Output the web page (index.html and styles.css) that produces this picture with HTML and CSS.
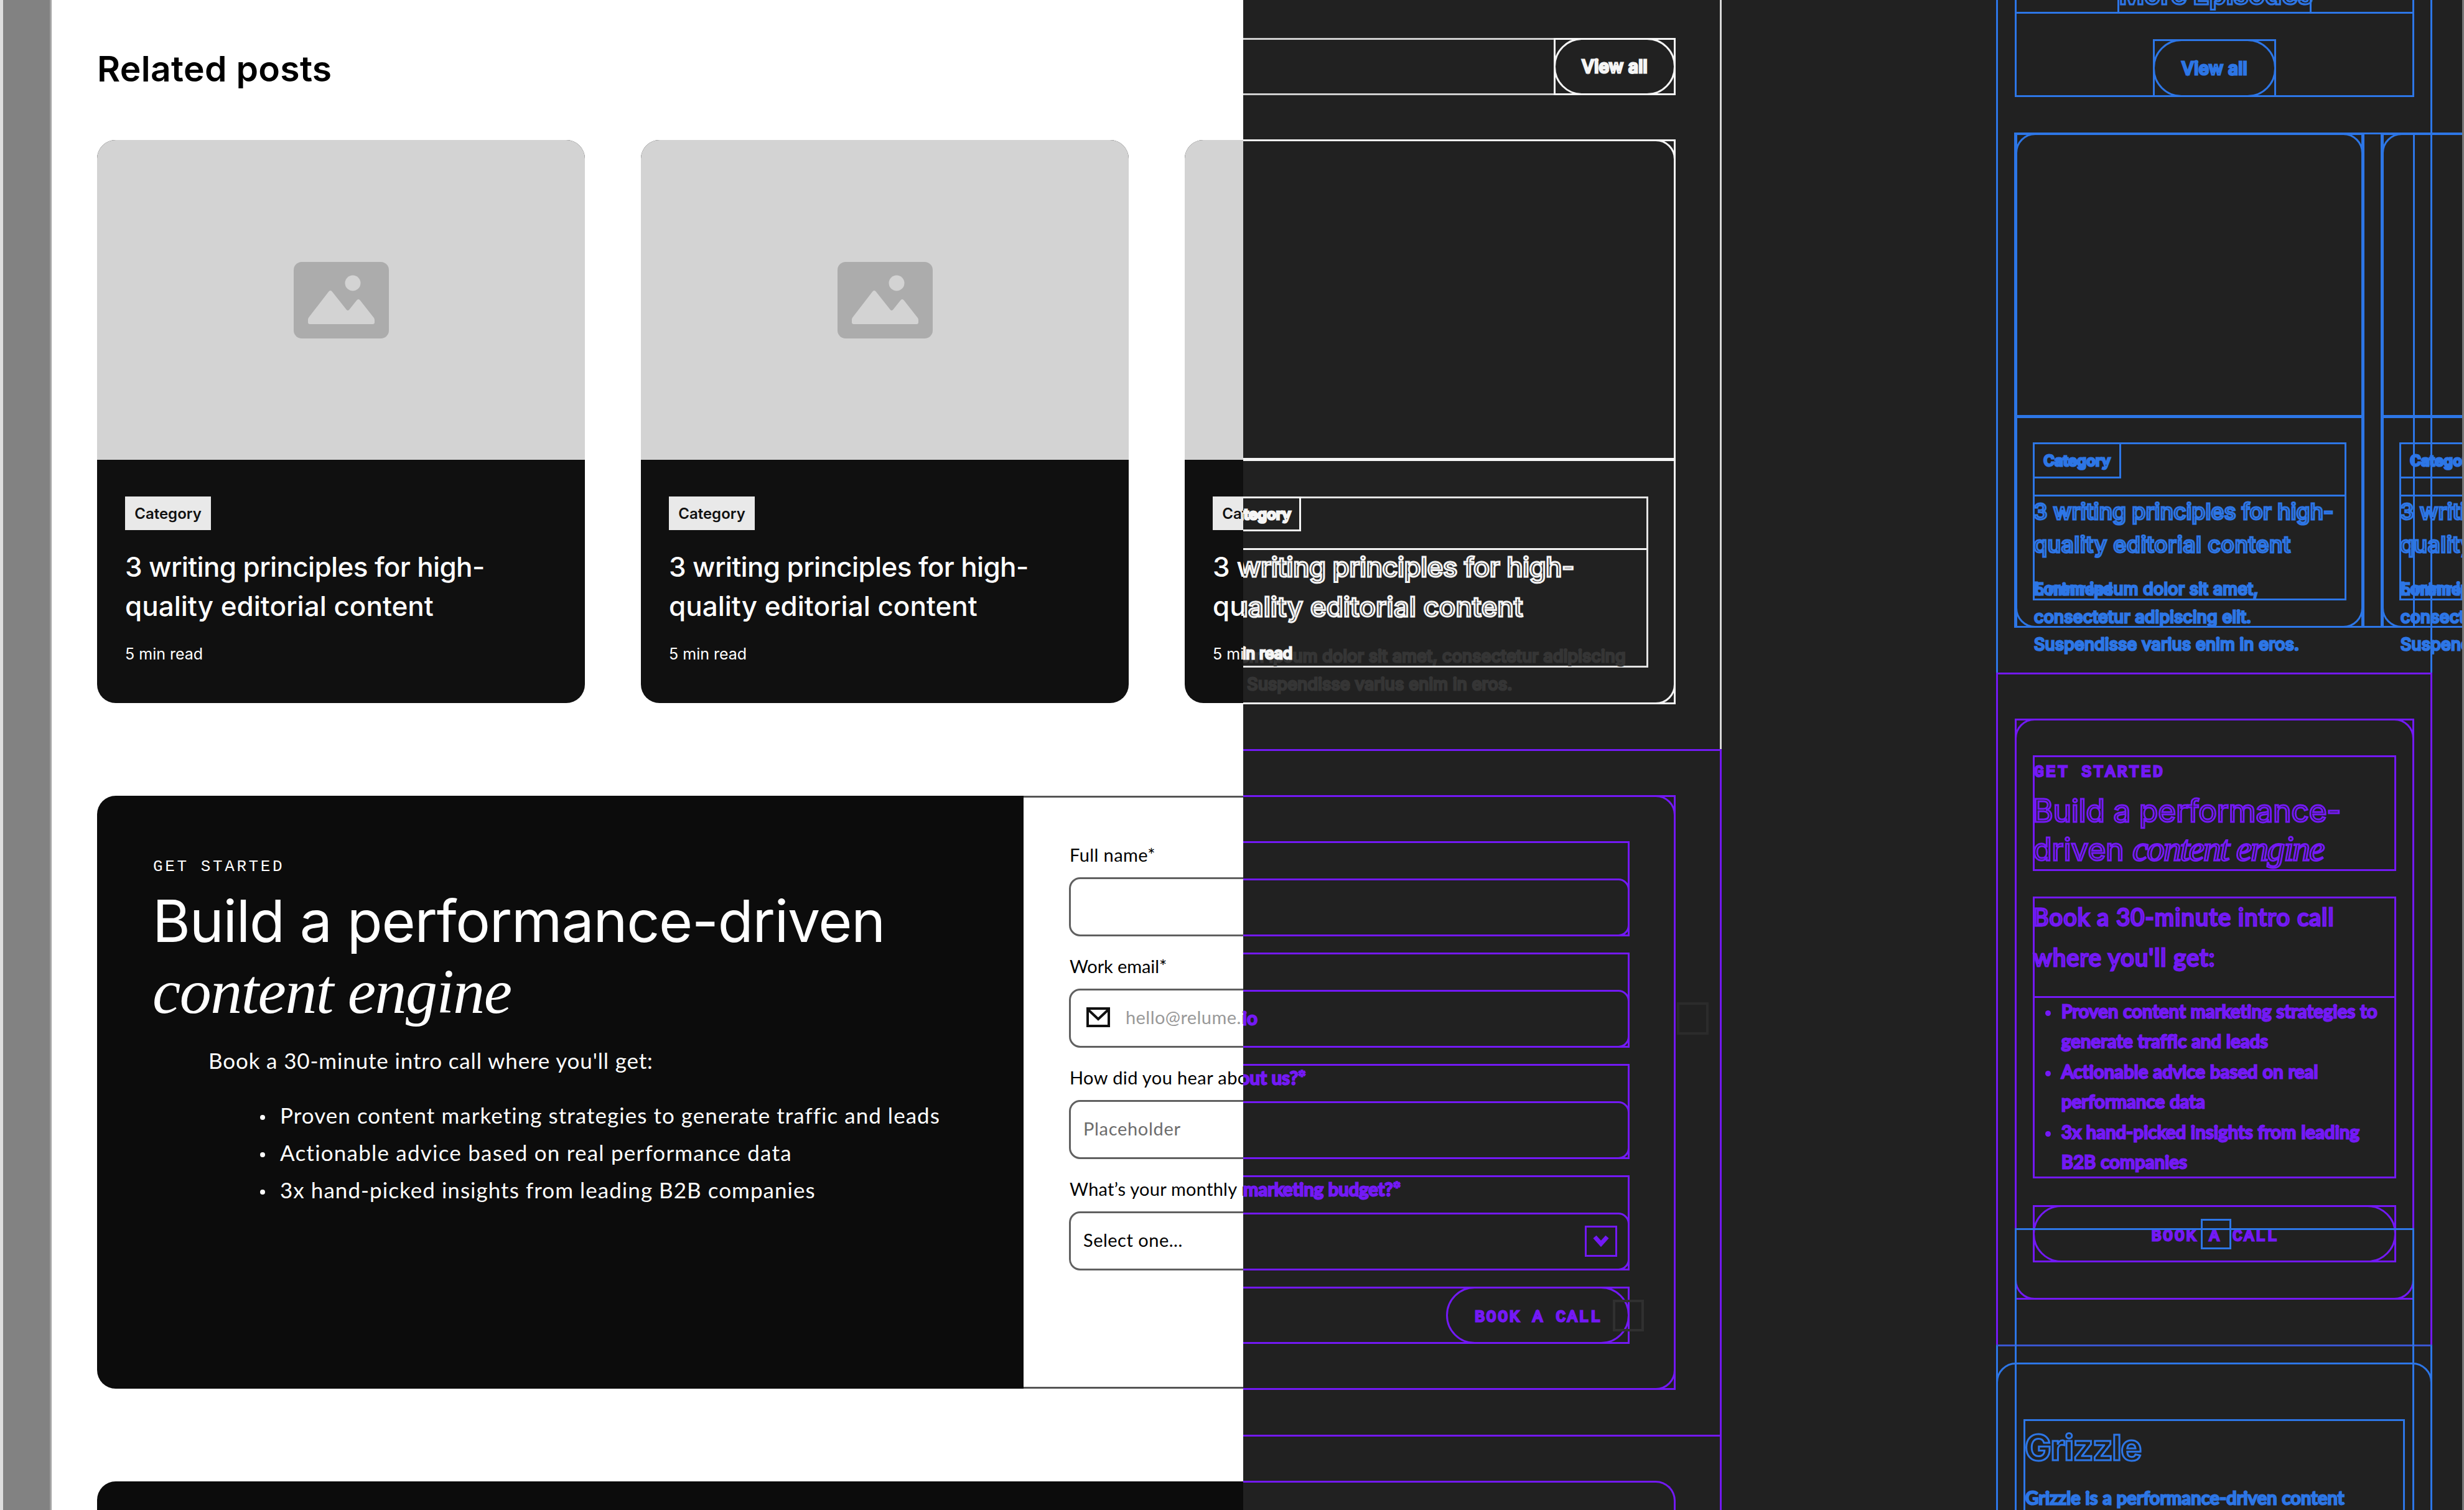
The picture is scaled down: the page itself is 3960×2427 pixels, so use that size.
FILE: index.html
```html
<!DOCTYPE html>
<html lang="en">
<head>
<meta charset="utf-8">
<title>Grizzle – Related posts</title>
<link rel="stylesheet" href="styles.css">
</head>
<body>
<div class="canvas">

  <!-- Filled preview -->
  <main class="preview">
    <div class="gutter"></div>
    <div class="page">
      <h2 class="page-title">Related posts</h2>
      <div class="posts">
        <article class="post">
          <div class="post-media">
            <svg class="placeholder" viewBox="0 0 153 123"><rect width="153" height="123" rx="13"/><circle cx="95" cy="34" r="12.5"/><path d="M26 100q-3 0-3-3v-4q0-2 1-3.500L56 48q3-4 6 0l23 29q2 2 4 0l12-15q3-4 6 0l22 28q1 1.500 1 3.500v3.500q0 3-3 3z"/></svg>
          </div>
          <div class="post-body">
            <span class="tag">Category</span>
            <h3 class="post-title"><span class="tight">3 writing principles for high-</span><br>quality editorial content</h3>
            <p class="post-meta">5 min read</p>
          </div>
        </article>
        <article class="post">
          <div class="post-media">
            <svg class="placeholder" viewBox="0 0 153 123"><rect width="153" height="123" rx="13"/><circle cx="95" cy="34" r="12.5"/><path d="M26 100q-3 0-3-3v-4q0-2 1-3.500L56 48q3-4 6 0l23 29q2 2 4 0l12-15q3-4 6 0l22 28q1 1.500 1 3.500v3.500q0 3-3 3z"/></svg>
          </div>
          <div class="post-body">
            <span class="tag">Category</span>
            <h3 class="post-title"><span class="tight">3 writing principles for high-</span><br>quality editorial content</h3>
            <p class="post-meta">5 min read</p>
          </div>
        </article>
        <article class="post">
          <div class="post-media"></div>
          <div class="post-body">
            <span class="tag">Category</span>
            <h3 class="post-title"><span class="tight">3 writing principles for high-</span><br>quality editorial content</h3>
            <p class="post-meta">5 min read</p>
          </div>
        </article>
      </div>

      <section class="cta">
        <div class="cta-copy">
          <p class="eyebrow">GET STARTED</p>
          <h1 class="cta-title">Build a performance-driven <em>content engine</em></h1>
          <p class="cta-lead">Book a 30-minute intro call where you'll get:</p>
          <ul class="cta-list">
            <li>Proven content marketing strategies to generate traffic and leads</li>
            <li class="wide">Actionable advice based on real performance data</li>
            <li>3x hand-picked insights from leading B2B companies</li>
          </ul>
        </div>
        <form class="form">
          <div class="group"><label class="label">Full name*</label><div class="field"></div></div>
          <div class="group"><label class="label snug">Work email*</label>
            <div class="field mail">
              <svg class="envelope" viewBox="0 0 38 32"><rect x="2" y="2" width="34" height="28"/><path d="M3 4l16 15L35 4"/></svg>
              <span>hello@relume.io</span>
            </div>
          </div>
          <div class="group"><label class="label">How did you hear about us?*</label><div class="field hint">Placeholder</div></div>
          <div class="group"><label class="label budget">What’s your monthly marketing budget?*</label><div class="field select">Select one...</div></div>
        </form>
      </section>
      <footer class="footer"></footer>
    </div>
  </main>

  <!-- Outline view -->
  <div class="outline">
    <div class="desk">
      <section class="desk-posts">
        <div class="desk-head">
          <div class="wire pill"><span class="view-all">View all</span></div>
        </div>
        <div class="wire round desk-card">
          <div class="desk-media"></div>
          <div class="desk-body">
            <p class="excerpt ghost-text">Lorem ipsum dolor sit amet, consectetur adipiscing<br>elit. Suspendisse varius enim in eros.</p>
            <div class="wire tag-wire">Category</div>
            <div class="title-wire"><p class="desk-title"><span class="tight">3 writing principles for high-</span><br>quality editorial content</p></div>
            <p class="read">5 min read</p>
          </div>
        </div>
      </section>
      <section class="desk-cta">
        <div class="wire round desk-panel">
          <div class="wire wgroup"><span></span><div class="wire wfield"></div></div>
          <div class="wire wgroup"><span></span><div class="wire wfield wmail">hello@relume.io</div></div>
          <div class="wire wgroup"><span class="label wlabel">How did you hear about us?*</span><div class="wire wfield"></div></div>
          <div class="wire wgroup"><span class="label wlabel budget">What’s your monthly marketing budget?*</span>
            <div class="wire wfield wselect">
              <svg class="chevron" viewBox="0 0 52 50"><rect x="1.500" y="1.500" width="49" height="47"/><path class="chevron-mark" d="M16 18l10 11 10-11"/></svg>
            </div>
          </div>
          <div class="wire wsubmit"><div class="wbutton book">BOOK A CALL</div></div>
        </div>
      </section>
      <section class="desk-foot"><div class="desk-footer"></div></section>
    </div>

    <div class="phone">
      <section class="ph-posts">
        <div class="ph-head">
          <div class="ph-title-row"><div class="ph-title-box"><span class="ph-title">More Episodes</span></div></div>
          <div class="ph-action"><div class="wire pill ph-pill"><span class="view-all">View all</span></div></div>
        </div>
        <div class="ph-strip">
          <div class="wire round ph-card">
            <div class="ph-media"></div>
            <div class="wire ph-body">
              <div class="wire tag-wire ph-tag">Category</div>
              <div class="title-wire ph-title-wire"><p class="ph-card-title"><span class="tight">3 writing principles for high-</span><br>quality editorial content</p></div>
              <p class="read ph-read">5 min read</p>
              <p class="excerpt ph-excerpt">Lorem ipsum dolor sit amet,<br>consectetur adipiscing elit.<br>Suspendisse varius enim in eros.</p>
            </div>
          </div>
          <div class="wire round ph-card">
            <div class="ph-media"></div>
            <div class="wire ph-body">
              <div class="wire tag-wire ph-tag">Category</div>
              <div class="title-wire ph-title-wire"><p class="ph-card-title"><span class="tight">3 writing principles for high-</span><br>quality editorial content</p></div>
              <p class="read ph-read">5 min read</p>
              <p class="excerpt ph-excerpt">Lorem ipsum dolor sit amet,<br>consectetur adipiscing elit.<br>Suspendisse varius enim in eros.</p>
            </div>
          </div>
          <div class="ph-bound"></div>
        </div>
      </section>

      <section class="ph-cta">
        <div class="wire round ph-panel">
          <div class="wire ph-intro">
            <p class="eyebrow-wire">GET STARTED</p>
            <p class="ph-heading">Build a performance-<br>driven <em>content engine</em></p>
          </div>
          <div class="wire ph-details">
            <p class="ph-lead">Book a 30-minute intro call<br>where you'll get:</p>
            <ul class="ph-list">
              <li>Proven content marketing strategies to<br>generate traffic and leads</li>
              <li>Actionable advice based on real<br>performance data</li>
              <li>3x hand-picked insights from leading<br>B2B companies</li>
            </ul>
          </div>
          <div class="wire pill ph-book"><span class="book">BOOK A CALL</span></div>
        </div>
      </section>

      <section class="ph-foot">
        <div class="ph-footer">
          <div class="wire ph-footer-body">
            <p class="brand">Grizzle</p>
            <p class="about">Grizzle is a performance-driven content</p>
          </div>
        </div>
      </section>
    </div>

    <div class="mark mark-field"></div>
    <div class="mark mark-button"></div>
    <div class="mark mark-book"></div>
    <div class="mark mark-frame"></div>
    <div class="edge"></div>
  </div>
</div>
</body>
</html>
```
FILE: styles.css
```css
* { box-sizing: border-box; margin: 0; padding: 0; }

:root {
  --sans: Inter, sans-serif;
  --text: Lato, sans-serif;
  --mono: "Liberation Mono", monospace;
  --serif: "Liberation Serif", serif;
  --blue: #2d76e6;
  --violet: #7319f5;
}

body { background: #212121; }
ul { list-style: none; }

.canvas {
  display: flex;
  width: 3960px;
  height: 2427px;
  overflow: hidden;
  font-family: var(--sans);
  white-space: nowrap;
}

/* ---------- Filled preview ---------- */
.preview { display: flex; flex: none; width: 1998px; height: 2427px; overflow: hidden; background: #fff; }
.gutter { flex: none; width: 83px; background: #828282; border-left: 5px solid #dedede; border-right: 3px solid #a3a3a3; }
.page { flex: 1; min-width: 0; padding: 76px 0 0 73px; }
.page-title { font-size: 57px; line-height: 70px; font-weight: 600; letter-spacing: .3px; color: #000; }

.posts { display: grid; grid-template-columns: repeat(3, 784px); gap: 90px; margin-top: 79px; height: 905px; }
.post { border-radius: 30px; overflow: hidden; background: #101010; color: #fff; }
.post-media { display: flex; align-items: center; justify-content: center; height: 514px; background: #d3d3d3; }
.placeholder { width: 153px; height: 123px; fill: #d3d3d3; }
.placeholder rect { fill: #acacac; }
.post-body { padding: 59px 45px 0; }
.tag { display: flex; align-items: center; justify-content: center; width: 138px; height: 54px; background: #e9e9e9; color: #111; font-size: 24px; font-weight: 600; }
.post-title { margin-top: 28px; font-size: 44px; line-height: 63px; font-weight: 500; }
.tight { letter-spacing: -.64px; }
.post-meta { margin-top: 30px; font-size: 25px; line-height: 30px; }

.cta { display: flex; width: 2536px; height: 953px; margin-top: 149px; border-radius: 30px; overflow: hidden; }
.cta-copy { width: 1489px; padding: 94px 0 0 90px; background: #0c0c0c; color: #fff; }
.eyebrow { font: 26px/40px var(--mono); letter-spacing: 3.600px; }
.cta-title { margin: 10px 0 0 -1px; font-size: 93px; line-height: 114px; font-weight: 400; letter-spacing: -1.200px; }
.cta-title em { display: block; font-family: var(--serif); font-size: 102px; letter-spacing: -1.5px; }
.cta-lead { margin: 28px 0 0 89px; font: 35px/50px var(--text); letter-spacing: .86px; }
.cta-list { margin: 34px 0 0 172px; font: 35px/59.800px var(--text); letter-spacing: 1.040px; }
.cta-list li { display: flex; align-items: center; gap: 24px; }
.cta-list li::before { content: ""; width: 8px; height: 8px; margin-top: 7px; border-radius: 50%; background: #fff; }
.cta-list .wide { letter-spacing: 1.220px; }

.form { flex: 1; display: flex; flex-direction: column; gap: 28px; padding: 72px 0 0 73px; border: solid #555; border-width: 3px 0; background: #fff; }
.group { display: flex; flex-direction: column; gap: 16px; }
.label { font: 29px/40px var(--text); letter-spacing: .4px; color: #000; }
.snug { letter-spacing: -.1px; }
.budget { letter-spacing: .25px; }
.form .label { padding-left: 1px; }
.field { display: flex; align-items: center; height: 95px; width: 900px; padding: 0 20px 3px; border: 3px solid #606060; border-radius: 18px; font: 29px/40px var(--text); }
.mail { gap: 25px; padding-left: 25px; letter-spacing: .43px; color: #999; }
.envelope { width: 38px; height: 32px; fill: none; stroke: #111; stroke-width: 4; }
.hint { letter-spacing: .7px; color: #6c6c6c; }
.select { letter-spacing: .5px; color: #000; }
.footer { height: 60px; width: 2536px; margin-top: 149px; border-radius: 30px 30px 0 0; background: #0c0c0c; }

/* ---------- Outline view ---------- */
.outline {
  position: relative;
  display: flex;
  flex: none;
  width: 1962px;
  height: 2427px;
  overflow: hidden;
  background: #212121;
  -webkit-text-fill-color: transparent;
  -webkit-text-stroke: 3px currentColor;
}
.wire { border: 3px solid currentColor; }
.round, .pill { position: relative; }
.round::after, .pill::after { content: ""; position: absolute; inset: -3px; border: 3px solid currentColor; border-radius: 32px; }
.pill { display: flex; align-items: center; justify-content: center; }
.pill::after { border-radius: 46px; }
.view-all { font-size: 28px; font-weight: 500; letter-spacing: .3px; }
.book { font-family: var(--mono); font-size: 26px; font-weight: 500; letter-spacing: 3px; }
.tag-wire { display: flex; align-items: center; justify-content: center; width: 140px; height: 56px; font-size: 24px; font-weight: 600; }
.title-wire { border-top: 3px solid currentColor; font-weight: 500; }
.read { font-size: 25px; line-height: 30px; }
.excerpt { position: absolute; font-size: 27px; line-height: 44.500px; letter-spacing: .22px; }
.ghost-text { color: #353535; }

.desk { flex: none; width: 769px; height: 2427px; overflow: hidden; }
.desk-posts { height: 1204px; padding-top: 61px; border-right: 3px solid #d8d8d8; color: #f5f5f5; }
.desk-head { display: flex; justify-content: flex-end; width: 695px; height: 92px; border: solid #d0d0d0; border-width: 3px 0; }
.desk-head .pill { width: 196px; margin: -3px 0; }
.desk-card { width: 786px; height: 908px; margin: 71px 0 0 -91px; }
.desk-media { height: 514px; border-bottom: 5px solid currentColor; }
.desk-body { position: relative; width: 698px; height: 275px; margin: 57px 0 0 41px; border: 3px solid #e4e4e4; }
.desk-body > .tag-wire { margin: -3px; }
.desk-body > .excerpt { left: -4px; top: 232px; }
.desk-body .title-wire { margin-top: 30px; }
.desk-title { margin: -5px 0 0 -2px; font-size: 44px; line-height: 64px; }
.desk-body > .read { position: relative; margin: 28px 0 0 -2px; }

.desk-cta { height: 1102px; padding-top: 71px; border: solid var(--violet); border-width: 3px 3px 0 0; color: var(--violet); }
.desk-panel { display: flex; flex-direction: column; gap: 26px; width: 1044px; height: 956px; margin-left: -349px; padding: 71px 71px 0 70px; }
.wgroup { display: flex; flex: none; flex-direction: column; justify-content: space-between; height: 153px; }
.wlabel { margin: -1px 0 0 -3px; color: var(--violet); }
.wfield { display: flex; align-items: center; height: 93px; margin: 0 -3px -3px; border-radius: 18px; }
.wmail { padding: 0 0 4px 86px; font: 29px/40px var(--text); letter-spacing: .43px; }
.wselect { justify-content: flex-end; padding: 0 17px 2px 0; }
.chevron { width: 52px; height: 50px; fill: none; stroke: currentColor; stroke-width: 3; }
.chevron-mark { stroke-width: 7; }
.wsubmit { display: flex; justify-content: flex-end; height: 92px; }
.wbutton { display: flex; align-items: center; justify-content: center; width: 295px; margin: -3px; padding: 6px 0 0 2px; border: 3px solid currentColor; border-radius: 46px; }
.desk-foot { height: 130px; padding-top: 71px; border: solid var(--violet); border-width: 3px 3px 0 0; }
.desk-footer { width: 695px; height: 80px; border: solid var(--violet); border-width: 3px 3px 0 0; border-radius: 0 32px 0 0; }

.phone { flex: none; width: 701px; height: 2427px; margin-left: 441px; color: var(--blue); }
.ph-posts { height: 1081px; padding-left: 27px; border: solid currentColor; border-width: 0 3px; }
.ph-head { width: 642px; border: solid currentColor; border-width: 0 3px 3px; }
.ph-title-row { display: flex; justify-content: center; height: 22px; border-bottom: 3px solid currentColor; }
.ph-title-box { width: 312px; height: 22px; border: solid currentColor; border-width: 0 3px; text-align: center; }
.ph-title { display: block; margin-top: -35px; font-size: 43px; line-height: 52px; font-weight: 700; }
.ph-action { display: flex; justify-content: center; height: 131px; padding-top: 41px; }
.ph-pill { width: 198px; height: 93px; margin-bottom: -3px; }
.ph-strip { position: relative; display: flex; gap: 26px; width: 1200px; height: 796px; margin-top: 57px; border: 3px solid currentColor; }
.ph-card { flex: none; width: 563px; margin: -3px 0 -3px; border-width: 4px 5px 3px; }
.ph-card:first-child { margin-left: -4px; }
.ph-media { height: 455px; border-bottom: 5px solid currentColor; }
.ph-body { position: relative; width: 504px; height: 254px; margin: 39px 0 0 25px; }
.ph-body > .ph-tag { width: 142px; height: 58px; margin: -3px; }
.ph-title-wire { margin-top: 29px; }
.ph-card-title { margin: -2px 0 0 -2px; font-size: 36px; line-height: 53px; letter-spacing: .32px; }
.ph-card-title .tight { letter-spacing: -.2px; }
.ph-read { margin-top: 30px; }
.ph-excerpt { left: -1px; top: 211px; }
.ph-bound { position: absolute; left: 637px; top: 0; bottom: 0; border-left: 3px solid currentColor; }

.ph-cta { height: 1080px; padding: 71px 0 0 27px; border: solid var(--violet); border-width: 3px 3px 0; color: var(--violet); }
.ph-panel { width: 642px; height: 934px; padding: 56px 26px 0; }
.ph-intro { height: 186px; padding-top: 4px; }
.eyebrow-wire { font: 26px/40px var(--mono); letter-spacing: 3.500px; margin-left: -1px; }
.ph-heading { margin: 11px 0 0 -3px; font-size: 50px; line-height: 62px; letter-spacing: -.32px; }
.ph-heading em { font-family: var(--serif); font-size: 57px; line-height: 1; letter-spacing: -1.900px; }
.ph-details { height: 453px; margin-top: 41px; }
.ph-lead { margin: -3px 0 0 -2px; height: 160px; font: 38px/65px var(--text); letter-spacing: 1.160px; }
.ph-list { border-top: 3px solid currentColor; font: 29px/48.400px var(--text); letter-spacing: .38px; }
.ph-list li { display: flex; gap: 17px; margin-left: 17px; }
.ph-list li:first-child { margin-top: -3px; }
.ph-list li::before { content: ""; flex: none; width: 9px; height: 9px; margin-top: 23px; border-radius: 50%; background: currentColor; }
.ph-book { height: 92px; margin-top: 43px; padding: 7px 0 0 2px; }

.ph-foot { height: 266px; border: solid var(--blue); border-width: 3px 3px 0; border-top-color: #3a56d0; }
.ph-footer { height: 300px; margin: 26px -3px 0; padding: 88px 41px 0; border: 3px solid currentColor; border-radius: 32px; }
.ph-footer-body { height: 300px; padding-top: 8px; }
.brand { margin-left: -1px; font-size: 57px; line-height: 70px; font-weight: 700; letter-spacing: -1.400px; }
.about { margin: 25px 0 0; font: 29px/40px var(--text); letter-spacing: .29px; }

/* Free objects lying on the canvas */
.mark { position: absolute; border: 4px solid #2b2b2b; }
.mark-field { left: 697px; top: 1611px; width: 51px; height: 52px; }
.mark-button { left: 594px; top: 2089px; width: 50px; height: 51px; border-color: #303030; }
.mark-book { left: 1539px; top: 1959px; width: 49px; height: 49px; border: 3px solid var(--blue); }
.mark-frame { left: 1240px; top: 1974px; width: 642px; height: 500px; border: 3px solid var(--blue); }
.edge { position: absolute; right: 0; top: 0; bottom: 0; width: 3px; background: #777; }
```
